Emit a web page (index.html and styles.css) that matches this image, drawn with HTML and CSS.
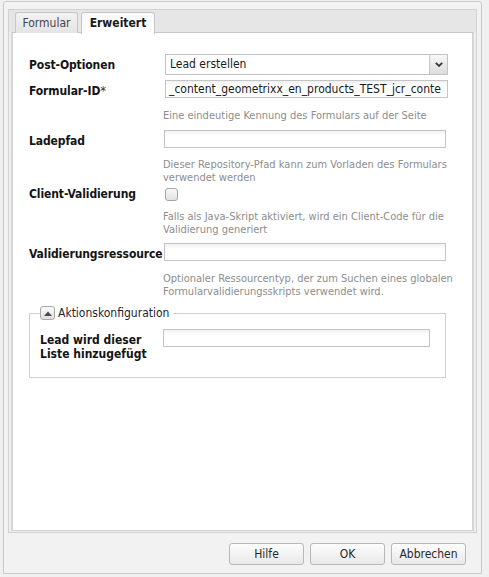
FILE: index.html
```html
<!DOCTYPE html>
<html lang="de">
<head>
<meta charset="utf-8">
<title>Formular</title>
<link rel="stylesheet" href="styles.css">
</head>
<body>
<div class="window">
  <div class="panel">
    <div class="tabstrip">
      <div class="tab">Formular</div>
      <div class="tab active">Erweitert</div>
    </div>
    <div class="body">
      <div class="row r1">
        <div class="label">Post-Optionen</div>
        <div class="select">
          <span class="select-text">Lead erstellen</span>
          <span class="trigger"><svg width="8" height="5" viewBox="0 0 8 5"><polyline points="0.8,0.8 4,4 7.2,0.8" fill="none" stroke="#3a3a3a" stroke-width="1.8"/></svg></span>
        </div>
      </div>
      <div class="row r2">
        <div class="label low">Formular-ID<span class="req">*</span></div>
        <div class="input wide"><span class="input-text">_content_geometrixx_en_products_TEST_jcr_conte</span></div>
      </div>
      <div class="help h1">Eine eindeutige Kennung des Formulars auf der Seite</div>
      <div class="row r3">
        <div class="label low">Ladepfad</div>
        <div class="input"></div>
      </div>
      <div class="help h2">Dieser Repository-Pfad kann zum Vorladen des Formulars verwendet werden</div>
      <div class="row r4">
        <div class="label">Client-Validierung</div>
        <div class="checkbox"></div>
      </div>
      <div class="help h3">Falls als Java-Skript aktiviert, wird ein Client-Code für die Validierung generiert</div>
      <div class="row r5">
        <div class="label low">Validierungsressource</div>
        <div class="input"></div>
      </div>
      <div class="help h4">Optionaler Ressourcentyp, der zum Suchen eines globalen Formularvalidierungsskripts verwendet wird.</div>
      <fieldset class="fieldset">
        <legend class="legend"><span class="toggle"><svg width="8" height="5" viewBox="0 0 8 5"><polygon points="0,5 4,0.5 8,5" fill="#4a4a4a"/></svg></span><span class="legend-text">Aktionskonfiguration</span></legend>
        <div class="fs-row">
          <div class="fs-label">Lead wird dieser Liste hinzugefügt</div>
          <div class="input fs-input"></div>
        </div>
      </fieldset>
    </div>
  </div>
  <div class="footer">
    <button class="btn">Hilfe</button>
    <button class="btn">OK</button>
    <button class="btn">Abbrechen</button>
  </div>
</div>
</body>
</html>
```
FILE: styles.css
```css
html, body {
  margin: 0;
  padding: 0;
}
body {
  background: #f0f0f0;
  font-family: "DejaVu Sans Condensed", "DejaVu Sans", sans-serif;
  font-stretch: condensed;
  color: #1a1a1a;
}
.window {
  box-sizing: border-box;
  margin: 1px 0 0 3px;
  width: 479px;
  height: 573px;
  border: 1px solid #c9c9c9;
  border-radius: 3px 3px 0 0;
  background: #f2f2f2;
  padding: 7px 4px 0 4px;
  display: flex;
  flex-direction: column;
}
.panel {
  box-sizing: border-box;
  height: 524px;
  border: 1px solid #d2d2d2;
  background: #efefef;
  display: flex;
  flex-direction: column;
}
.tabstrip {
  height: 22px;
  background: #e6e6e6;
  display: flex;
  align-items: flex-start;
  padding-left: 6px;
  gap: 3px;
  position: relative;
  z-index: 1;
}
.tab {
  box-sizing: border-box;
  margin-top: 2px;
  height: 21px;
  padding-top: 3px;
  border: 1px solid #c6c6c6;
  border-bottom: none;
  border-radius: 3px 3px 0 0;
  background: linear-gradient(#f2f2f2, #e4e4e4);
  font-size: 12px;
  color: #45454f;
  text-align: center;
  width: 63px;
}
.tab.active {
  width: 74px;
  height: 22px;
  background: linear-gradient(#f9f9f9, #ffffff);
  font-weight: bold;
  color: #1a1a1a;
}
.body {
  flex: 1;
  margin: 0 2px 1px 2px;
  border: 2px solid #d6d6d6;
  border-top: 1px solid #c8c8c8;
  border-bottom: 1px solid #d0d0d0;
  background: #fff;
  padding: 21px 0 0 16px;
}
.row {
  display: flex;
  align-items: center;
}
.label {
  width: 135px;
  flex: none;
  font-size: 12px;
  letter-spacing: -0.1px;
  line-height: 16px;
  font-weight: bold;
  color: #141414;
  white-space: nowrap;
}
.label.low {
  padding-top: 4px;
}
.req {
  font-weight: normal;
  font-size: 13px;
  color: #333;
}
.select {
  box-sizing: border-box;
  position: relative;
  width: 283px;
  height: 21px;
  margin-left: 1px;
  border: 1px solid #c2c2c2;
  background: #fff;
  font-size: 12px;
  line-height: 19px;
  padding-left: 4px;
}
.select-text {
  color: #1a1a1a;
}
.trigger {
  position: absolute;
  top: 0;
  right: 0;
  width: 17px;
  height: 19px;
  border-left: 1px solid #c8c8c8;
  background: linear-gradient(#f7f7f7, #dcdcdc);
  display: flex;
  align-items: center;
  justify-content: center;
}
.input {
  box-sizing: border-box;
  width: 282px;
  height: 18px;
  border: 1px solid #c4c4c4;
  background: linear-gradient(#f1f1f1, #ffffff 5px);
  font-size: 12px;
  line-height: 16px;
  padding-left: 3px;
  overflow: hidden;
  white-space: nowrap;
}
.input.wide {
  width: 283px;
  margin-left: 1px;
}
.input-text {
  color: #1a1a1a;
}
.r2 { margin-top: 4px; }
.help {
  margin-left: 134px;
  font-size: 11px;
  line-height: 13px;
  color: #8d8d8d;
  width: 290px;
}
.h1 { margin-top: 10px; }
.r3 { margin-top: 7px; }
.h2 { margin-top: 9px; }
.r4 { margin-top: 2px; }
.checkbox {
  box-sizing: border-box;
  width: 13px;
  height: 13px;
  margin-left: 1px;
  border: 1px solid #a4a4a4;
  border-radius: 3px;
  background: linear-gradient(#f8f8f8, #e2e2e2);
}
.h3 { margin-top: 8px; }
.r5 { margin-top: 6px; }
.h4 { margin-top: 10px; }
.fieldset {
  box-sizing: border-box;
  margin: 8px 0 0 0;
  width: 417px;
  border: 1px solid #cfcfcf;
  padding: 0 15px 16px 10px;
  min-width: 0;
}
.legend {
  padding: 0 4px 0 0;
  display: flex;
  align-items: center;
  height: 14px;
}
.toggle {
  box-sizing: border-box;
  width: 15px;
  height: 14px;
  border: 1px solid #a8a8a8;
  border-radius: 3px;
  background: linear-gradient(#fbfbfb, #e0e0e0);
  display: flex;
  align-items: center;
  justify-content: center;
  margin-right: 3px;
}
.legend-text {
  font-size: 12px;
  color: #1c2636;
}
.fs-row {
  display: flex;
  align-items: flex-start;
  margin-top: 9px;
}
.fs-label {
  width: 123px;
  flex: none;
  margin-top: 4px;
  font-size: 12px;
  line-height: 14px;
  font-weight: bold;
  color: #141414;
}
.fs-input {
  width: 267px;
}
.footer {
  flex: 1;
  display: flex;
  justify-content: flex-end;
  align-items: flex-start;
  padding: 10px 11px 0 0;
  gap: 6px;
}
.btn {
  box-sizing: border-box;
  width: 75px;
  height: 22px;
  border: 1px solid #b8b8b8;
  border-radius: 3px;
  background: linear-gradient(#fdfdfd, #e8e8e8);
  font-family: inherit;
  font-stretch: condensed;
  font-size: 12px;
  color: #2a2a2a;
  padding: 0;
}
```
